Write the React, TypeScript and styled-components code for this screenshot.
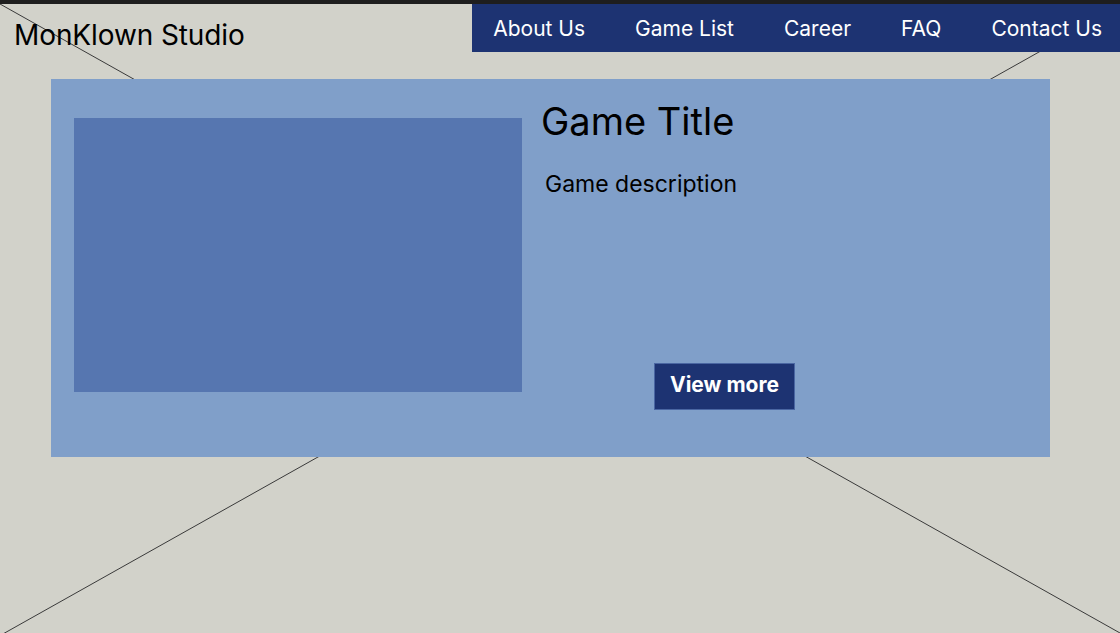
import React from "react";
import styled, { createGlobalStyle } from "styled-components";

const GlobalStyle = createGlobalStyle`
  html, body {
    margin: 0;
    padding: 0;
    background: #d2d2ca;
    font-family: Inter, "Noto Sans", "Liberation Sans", sans-serif;
    color: #000;
  }
  #root {
    width: 1120px;
    height: 633px;
    overflow: hidden;
  }
`;

const Page = styled.div`
  position: relative;
  width: 1120px;
  height: 633px;
  overflow: hidden;
  background: #d2d2ca;
`;

const Backdrop = styled.svg`
  position: absolute;
  inset: 0;
  width: 100%;
  height: 100%;
  z-index: 0;
  pointer-events: none;
`;

const Content = styled.div`
  position: relative;
  z-index: 1;
  display: flex;
  flex-direction: column;
`;

const TopStrip = styled.div`
  height: 4px;
  background: #1e1e1e;
`;

const Header = styled.header`
  display: flex;
  justify-content: space-between;
  align-items: flex-start;
  height: 48px;
`;

const Logo = styled.div`
  padding: 14px 0 0 14px;
  font-size: 28px;
  line-height: 34px;
  font-weight: 400;
  letter-spacing: -0.1px;
  color: #000;
`;

const Nav = styled.nav`
  display: flex;
  align-items: center;
  gap: 50px;
  height: 48px;
  padding: 0 18px 0 21px;
  background: #1d3372;
`;

const NavItem = styled.a`
  color: #fff;
  font-size: 21px;
  line-height: 25px;
  text-decoration: none;
  white-space: nowrap;
`;

const Card = styled.section`
  display: flex;
  align-items: flex-start;
  margin: 27px 0 0 51px;
  width: 999px;
  height: 378px;
  box-sizing: border-box;
  padding: 39px 0 0 23px;
  background: #809fc9;
`;

const Thumb = styled.div`
  flex: none;
  width: 448px;
  height: 274px;
  background: #5676b0;
`;

const Info = styled.div`
  display: flex;
  flex-direction: column;
  align-items: flex-start;
  padding: 0 0 0 19px;
  margin-top: -20px;
`;

const Title = styled.h1`
  margin: 0;
  font-size: 38px;
  line-height: 46px;
  font-weight: 400;
`;

const Description = styled.p`
  margin: 26px 0 0 4px;
  font-size: 23px;
  line-height: 28px;
  font-weight: 400;
`;

const Button = styled.button`
  margin: 165px 0 0 113px;
  width: 141px;
  height: 47px;
  box-sizing: border-box;
  border: 1px solid #4a66a2;
  background: #1d3372;
  color: #fff;
  font-family: inherit;
  font-size: 21px;
  font-weight: 700;
  padding: 0 0 5px;
  cursor: pointer;
`;

export default function App() {
  const links = ["About Us", "Game List", "Career", "FAQ", "Contact Us"];
  return (
    <Page>
      <GlobalStyle />
      <Backdrop viewBox="0 0 1120 633" preserveAspectRatio="none">
        <line x1="0" y1="4" x2="1120" y2="633" stroke="#3a3a3a" strokeWidth="1" />
        <line x1="1120" y1="6.5" x2="0" y2="635.6" stroke="#3a3a3a" strokeWidth="1" />
      </Backdrop>
      <Content>
        <TopStrip />
        <Header>
          <Logo>MonKlown Studio</Logo>
          <Nav>
            {links.map((l) => (
              <NavItem key={l} href="#">
                {l}
              </NavItem>
            ))}
          </Nav>
        </Header>
        <Card>
          <Thumb />
          <Info>
            <Title>Game Title</Title>
            <Description>Game description</Description>
            <Button>View more</Button>
          </Info>
        </Card>
      </Content>
    </Page>
  );
}
